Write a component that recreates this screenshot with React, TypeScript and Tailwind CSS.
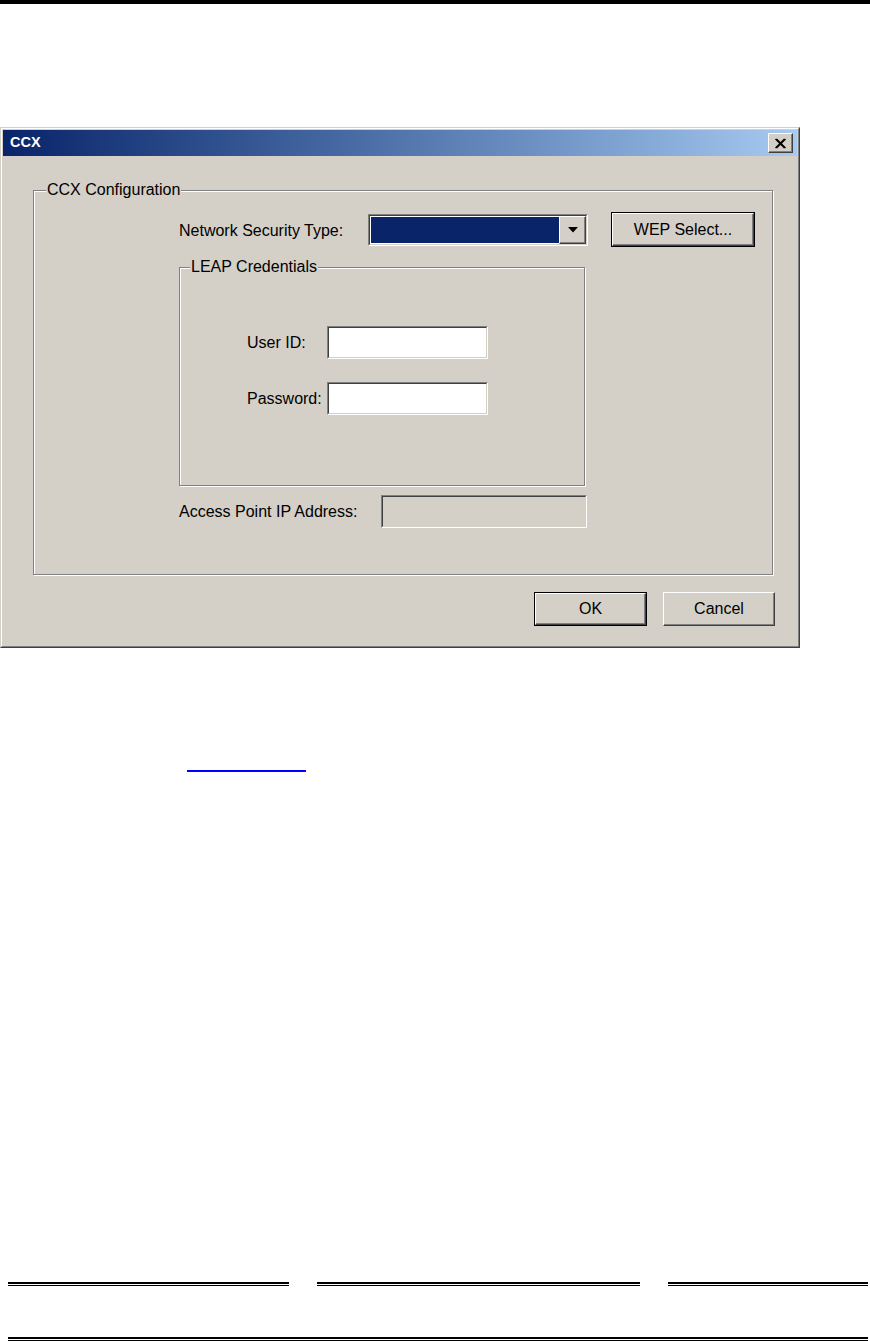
import React from 'react';

const face = "font-['Liberation_Sans',Arial,sans-serif]";

function GroupBox({ label, labelLeft, className, children }: { label: string; labelLeft: string; className: string; children: React.ReactNode }) {
    return (
        <div className={`relative border border-[#808080] shadow-[inset_1px_1px_0_#fff,1px_1px_0_#fff] ${className}`}>
            <span className={`absolute top-[-11px] ${labelLeft} bg-[#d4d0c8] px-[1px] leading-[20px]`}>{label}</span>
            {children}
        </div>
    );
}

function Button({ label, isDefault, className }: { label: string; isDefault?: boolean; className: string }) {
    const raised = 'flex items-center justify-center w-full h-full border border-t-white border-l-white border-r-[#404040] border-b-[#404040] shadow-[inset_-1px_-1px_0_#808080]';
    if (isDefault) {
        return (
            <div className={`border border-black ${className}`}>
                <div className={raised}>{label}</div>
            </div>
        );
    }
    return (
        <div className={className}>
            <div className={raised}>{label}</div>
        </div>
    );
}

function Sunken({ className, fill, children }: { className: string; fill: string; children?: React.ReactNode }) {
    return (
        <div className={`border border-t-[#808080] border-l-[#808080] border-r-white border-b-white ${className}`}>
            <div className={`w-full h-full flex border border-t-[#404040] border-l-[#404040] border-r-[#d4d0c8] border-b-[#d4d0c8] ${fill}`}>
                {children}
            </div>
        </div>
    );
}

export default function App() {
    return (
        <div className={`w-[870px] h-[1341px] bg-white flex flex-col text-black ${face}`}>
            <div className="h-[4px] bg-black" />

            {/* dialog */}
            <div className="mt-[123px] w-[800px] h-[521px] border border-t-[#d4d0c8] border-l-[#d4d0c8] border-r-[#404040] border-b-[#404040]">
                <div className="w-full h-full border border-t-white border-l-white border-r-[#808080] border-b-[#808080] bg-[#d4d0c8] p-[1px] flex flex-col text-[16px]">
                    <div className="h-[26px] flex items-center justify-between bg-linear-to-r from-[#0a246a] to-[#a6caf0] pl-[7px] pr-[4px]">
                        <span className="text-white font-bold text-[14.5px]">CCX</span>
                        <div className="w-[25px] h-[20px] bg-[#d4d0c8] border border-t-white border-l-white border-r-[#404040] border-b-[#404040] shadow-[inset_-1px_-1px_0_#808080] flex items-center justify-center">
                            <svg width="13" height="11" viewBox="0 0 13 11">
                                <path d="M1.5 1 L10.5 10 M2.5 1 L11.5 10 M10.5 1 L1.5 10 M11.5 1 L2.5 10" stroke="#000" strokeWidth="1.4" />
                            </svg>
                        </div>
                    </div>

                    <div className="flex-1 flex flex-col">
                        <GroupBox label="CCX Configuration" labelLeft="left-[12px]" className="ml-[30px] mt-[34px] w-[740px] h-[385px]">
                            <div className="flex flex-col pl-[145px] pt-[21px]">
                                <div className="flex items-center h-[35px]">
                                    <span className="w-[189px] pt-[2px]">Network Security Type:</span>
                                    <Sunken className="w-[220px] h-[32px]" fill="bg-white p-[1px]">
                                        <div className="flex-1 bg-[#0a246a]" />
                                        <div className="w-[27px] bg-[#d4d0c8] border border-t-white border-l-white border-r-[#404040] border-b-[#404040] shadow-[inset_-1px_-1px_0_#808080] flex items-center justify-center -m-[1px] ml-0">
                                            <svg width="10" height="6" viewBox="0 0 10 6">
                                                <path d="M0 0 H10 L5 5.5 Z" fill="#000" />
                                            </svg>
                                        </div>
                                    </Sunken>
                                    <Button label="WEP Select..." isDefault className="ml-[23px] w-[144px] h-[35px]" />
                                </div>

                                <GroupBox label="LEAP Credentials" labelLeft="left-[10px]" className="mt-[20px] w-[406px] h-[219px]">
                                    <div className="flex flex-col gap-[23px] pl-[67px] pt-[58px]">
                                        <div className="flex items-center">
                                            <span className="w-[80px]">User ID:</span>
                                            <Sunken className="w-[161px] h-[33px]" fill="bg-white" />
                                        </div>
                                        <div className="flex items-center">
                                            <span className="w-[80px]">Password:</span>
                                            <Sunken className="w-[161px] h-[33px]" fill="bg-white" />
                                        </div>
                                    </div>
                                </GroupBox>

                                <div className="flex items-center mt-[9px]">
                                    <span className="w-[202px]">Access Point IP Address:</span>
                                    <Sunken className="w-[206px] h-[33px]" fill="bg-[#d4d0c8]" />
                                </div>
                            </div>
                        </GroupBox>

                        <div className="flex justify-end gap-[16px] pr-[22px] mt-[17px]">
                            <Button label="OK" isDefault className="w-[113px] h-[34px]" />
                            <Button label="Cancel" className="w-[112px] h-[34px]" />
                        </div>
                    </div>
                </div>
            </div>

            <div className="mt-[122px] ml-[187px] w-[119px] h-[2px] bg-[#0000ff]" />

            <div className="mt-auto flex flex-col">
                <div className="flex pl-[8px]">
                    <div className="w-[281px] h-[4px] border-t-2 border-b border-black" />
                    <div className="ml-[28px] w-[323px] h-[4px] border-t-2 border-b border-black" />
                    <div className="ml-[28px] w-[200px] h-[4px] border-t-2 border-b border-black" />
                </div>
                <div className="mt-[51px] ml-[8px] w-[860px] h-[4px] border-t-2 border-b border-black" />
            </div>
        </div>
    );
}
